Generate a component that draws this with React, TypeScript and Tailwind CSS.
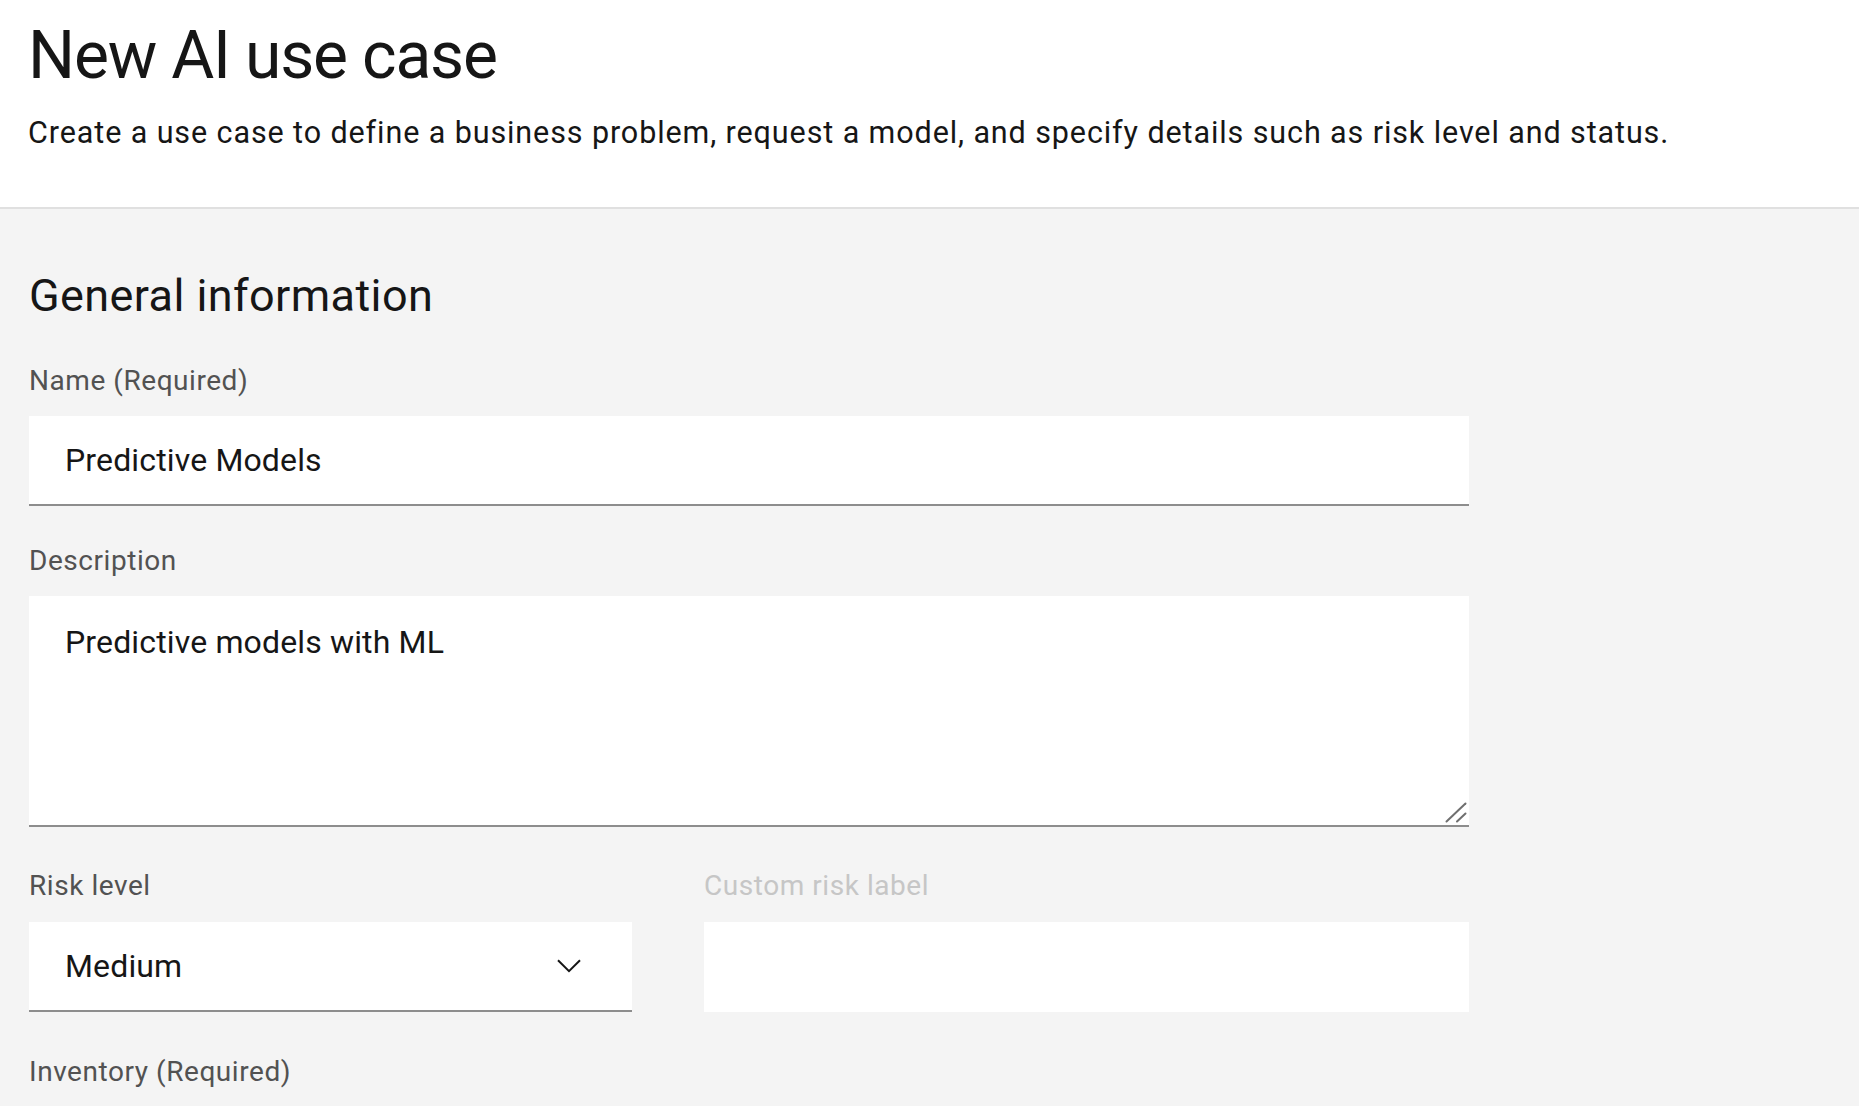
import React from 'react';

const label = 'block text-[28px] leading-[32px] tracking-[0.55px] text-[#525252]';
const field =
  'block w-full bg-white border-0 border-b-2 border-[#8d8d8d] text-[32px] tracking-[0.15px] text-[#161616] outline-none';

function ChevronDown() {
  return (
    <svg width="24" height="14" viewBox="0 0 24 14" fill="none" stroke="#161616" strokeWidth="2">
      <path d="M1 1.2l11 11 11-11" />
    </svg>
  );
}

function ResizeGrip() {
  return (
    <svg
      className="absolute right-[2px] bottom-[4px] pointer-events-none"
      width="22"
      height="21"
      viewBox="0 0 22 21"
      fill="none"
      stroke="#6f6f6f"
      strokeWidth="2"
      strokeLinecap="round"
    >
      <path d="M1.5 19.5L20.5 1.5" />
      <path d="M12 19.5L20.5 11.5" />
    </svg>
  );
}

export default function App() {
  return (
    <div className="min-h-screen bg-[#f4f4f4] font-[Roboto,sans-serif] text-[#161616]">
      <header className="bg-white border-b-2 border-[#e0e0e0] pl-[28px] pt-[16px] pb-[54px]">
        <h1 className="text-[66px] leading-[80px] font-normal tracking-[-1.2px]">New AI use case</h1>
        <p className="mt-[17px] text-[30.5px] leading-[40px] tracking-[0.9px]">
          Create a use case to define a business problem, request a model, and specify details such as risk level and status.
        </p>
      </header>

      <main className="pl-[29px] pt-[59px] pb-10">
        <div className="w-[1440px]">
          <h2 className="text-[45px] leading-[56px] font-normal tracking-[0.4px]">General information</h2>

          <label className={`${label} mt-[41px]`}>Name (Required)</label>
          <input
            readOnly
            value="Predictive Models"
            className={`${field} mt-[19px] h-[90px] px-[36px]`}
          />

          <label className={`${label} mt-[39px]`}>Description</label>
          <div className="relative mt-[19px]">
            <textarea
              readOnly
              value="Predictive models with ML"
              className={`${field} h-[231px] resize-none pl-[36px] pr-[36px] pt-[26px] leading-[40px]`}
            />
            <ResizeGrip />
          </div>

          <div className="flex gap-[72px] mt-[43px]">
            <div className="w-[603px]">
              <label className={label}>Risk level</label>
              <div className="mt-[20px] h-[90px] flex items-center justify-between bg-white border-b-2 border-[#8d8d8d] pl-[36px] pr-[51px]">
                <span className="text-[32px] leading-[40px] tracking-[0.15px]">Medium</span>
                <ChevronDown />
              </div>
            </div>
            <div className="flex-1">
              <label className="block text-[28px] leading-[32px] tracking-[0.55px] text-[#c6c6c6]">Custom risk label</label>
              <div className="mt-[20px] h-[90px] bg-white" />
            </div>
          </div>

          <label className={`${label} mt-[44px]`}>Inventory (Required)</label>
          <div className="mt-[20px] h-[90px] bg-white border-b-2 border-[#8d8d8d]" />
        </div>
      </main>
    </div>
  );
}
